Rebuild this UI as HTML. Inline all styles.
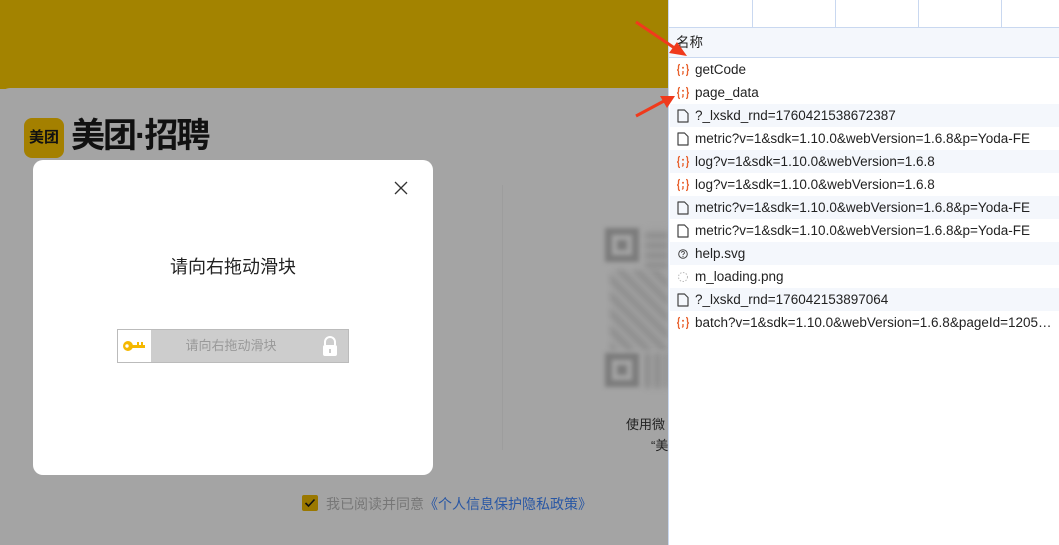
<!DOCTYPE html><html><head><meta charset="utf-8"><style>
*{margin:0;padding:0;box-sizing:border-box}
body{width:1059px;height:545px;overflow:hidden;position:relative;background:#a4a4a4;font-family:"Liberation Sans","Noto Sans CJK SC",sans-serif}
.abs{position:absolute}
#top{left:0;top:0;width:668px;height:89px;background:#a38300}
#gray{left:0;top:88px;width:668px;height:457px;background:#a4a4a4;border-top-left-radius:10px}
#panel{left:668px;top:0;width:391px;height:545px;background:#fff;border-left:1px solid #c9d8f0}
.row{position:absolute;left:1px;width:390px;height:23px;font-size:13.5px;color:#222;line-height:23px;padding-left:25px;white-space:nowrap;overflow:hidden}
.row.alt{background:#f4f7fc}
.ic{position:absolute;left:6px;top:5px;width:14px;height:14px}
.fp{position:absolute;width:34px;height:34px;border:7px solid #7c7c7c;filter:blur(2px)}
.fp:after{content:"";position:absolute;left:5px;top:5px;width:10px;height:10px;background:#7c7c7c}
</style></head><body>
<div id="top" class="abs"></div>
<div id="gray" class="abs"></div>
<div class="abs" style="left:24px;top:118px;width:40px;height:40px;background:#a48000;border-radius:8px;font-size:15px;font-weight:bold;color:#111;line-height:40px;text-align:center">美团</div>
<div class="abs" style="left:71px;top:114px;font-size:34px;font-weight:bold;color:#111;letter-spacing:-2px;line-height:44px">美团·招聘</div>
<div class="abs" style="left:502px;top:185px;width:1px;height:265px;background:#9d9d9d"></div>
<div class="fp" style="left:605px;top:228px"></div>
<div class="fp" style="left:605px;top:353px"></div>
<div class="abs" style="left:610px;top:270px;width:58px;height:80px;background:repeating-linear-gradient(45deg,#888 0 6px,#a0a0a0 6px 12px);filter:blur(3px);opacity:.8"></div>
<div class="abs" style="left:645px;top:228px;width:23px;height:40px;background:repeating-linear-gradient(0deg,#8a8a8a 0 5px,#a0a0a0 5px 10px);filter:blur(3px)"></div>
<div class="abs" style="left:645px;top:353px;width:23px;height:35px;background:repeating-linear-gradient(90deg,#8a8a8a 0 5px,#a0a0a0 5px 10px);filter:blur(3px)"></div>
<div class="abs" style="left:626px;top:414px;font-size:13px;color:#222">使用微</div>
<div class="abs" style="left:651px;top:435px;font-size:13px;color:#222">“美</div>
<div class="abs" style="left:302px;top:495px;width:16px;height:16px;background:#9a7800;border-radius:2px"><svg width="16" height="16"><path d="M3.5 8l3 3L12.5 4.5" stroke="#111" stroke-width="1.6" fill="none"/></svg></div>
<div class="abs" style="left:326px;top:494px;font-size:14px;color:#777">我已阅读并同意<span style="color:#2957a4">《个人信息保护隐私政策》</span></div>
<div class="abs" style="left:33px;top:160px;width:400px;height:315px;background:#fff;border-radius:10px">
<svg class="abs" style="left:361px;top:21px" width="14" height="14"><path d="M1 1L13 13M13 1L1 13" stroke="#333" stroke-width="1.3"/></svg>
<div class="abs" style="left:0;top:93px;width:400px;text-align:center;font-size:18px;color:#222">请向右拖动滑块</div>
<div class="abs" style="left:84px;top:169px;width:232px;height:34px;background:#cdcdcd;border:1px solid #bbb">
<div class="abs" style="left:0;top:0;width:33px;height:32px;background:#fff"><svg width="33" height="32"><circle cx="10" cy="16" r="5" fill="#f5b800"/><circle cx="9" cy="16" r="1.7" fill="#fff"/><rect x="14" y="15" width="13" height="3" fill="#f5b800"/><rect x="19" y="12" width="2" height="4" fill="#f5b800"/><rect x="23" y="12" width="2" height="4" fill="#f5b800"/></svg></div>
<div class="abs" style="left:33px;top:0;width:160px;text-align:center;line-height:32px;font-size:13px;color:#999">请向右拖动滑块</div>
<svg class="abs" style="left:203px;top:5px" width="18" height="22"><path d="M4 10V7a5 5 0 0110 0v3" stroke="#fff" stroke-width="2" fill="none"/><rect x="2" y="10" width="14" height="11" rx="2" fill="#fff"/><rect x="8" y="14" width="2" height="4" fill="#ccc"/></svg>
</div></div>
<div id="panel" class="abs">
<div class="abs" style="left:0;top:0;width:390px;height:28px;border-bottom:1px solid #c9d8f0"></div>
<div class="abs" style="left:83px;top:0;width:1px;height:28px;background:#c9d8f0"></div>
<div class="abs" style="left:166px;top:0;width:1px;height:28px;background:#c9d8f0"></div>
<div class="abs" style="left:249px;top:0;width:1px;height:28px;background:#c9d8f0"></div>
<div class="abs" style="left:332px;top:0;width:1px;height:28px;background:#c9d8f0"></div>
<div class="abs" style="left:0;top:28px;width:390px;height:30px;background:#f4f7fc;border-bottom:1px solid #c9d8f0;font-size:13.5px;line-height:29px;padding-left:7px;color:#222">名称</div>
</div>
<svg width="0" height="0" style="position:absolute"><defs><symbol id="js" viewBox="0 0 14 14"><path d="M4 1.5C2.5 1.5 2.5 2.5 2.5 4v1.5C2.5 6.5 1.5 7 1 7c.5 0 1.5.5 1.5 1.5V10c0 1.5 0 2.5 1.5 2.5M10 1.5c1.5 0 1.5 1 1.5 2.5v1.5c0 1 1 1.5 1.5 1.5-.5 0-1.5.5-1.5 1.5V10c0 1.5 0 2.5-1.5 2.5" stroke="#e8602c" stroke-width="1.3" fill="none"/><circle cx="7" cy="4.8" r="1" fill="#e8602c"/><path d="M7 8v2.5l-.8 1" stroke="#e8602c" stroke-width="1.3" fill="none"/></symbol><symbol id="doc" viewBox="0 0 14 14"><path d="M2 1h6.5l3.5 3.5V13H2z" stroke="#444" stroke-width="1.2" fill="none" stroke-linejoin="round"/></symbol></defs></svg>
<div class="abs" style="left:669px;top:0;width:390px;height:545px">
<div class="row" style="top:58px"><svg class="ic"><use href="#js"/></svg>getCode</div>
<div class="row" style="top:81px"><svg class="ic"><use href="#js"/></svg>page_data</div>
<div class="row alt" style="top:104px"><svg class="ic"><use href="#doc"/></svg>?_lxskd_rnd=1760421538672387</div>
<div class="row" style="top:127px"><svg class="ic"><use href="#doc"/></svg>metric?v=1&amp;sdk=1.10.0&amp;webVersion=1.6.8&amp;p=Yoda-FE</div>
<div class="row alt" style="top:150px"><svg class="ic"><use href="#js"/></svg>log?v=1&amp;sdk=1.10.0&amp;webVersion=1.6.8</div>
<div class="row" style="top:173px"><svg class="ic"><use href="#js"/></svg>log?v=1&amp;sdk=1.10.0&amp;webVersion=1.6.8</div>
<div class="row alt" style="top:196px"><svg class="ic"><use href="#doc"/></svg>metric?v=1&amp;sdk=1.10.0&amp;webVersion=1.6.8&amp;p=Yoda-FE</div>
<div class="row" style="top:219px"><svg class="ic"><use href="#doc"/></svg>metric?v=1&amp;sdk=1.10.0&amp;webVersion=1.6.8&amp;p=Yoda-FE</div>
<div class="row alt" style="top:242px"><svg class="ic"><circle cx="7" cy="7" r="4.3" stroke="#444" fill="none"/><path d="M5.6 5.8a1.4 1.4 0 112 1.2c-.5.3-.6.5-.6 1" stroke="#444" fill="none" stroke-width=".9"/><circle cx="7" cy="9.4" r=".6" fill="#444"/></svg>help.svg</div>
<div class="row" style="top:265px"><svg class="ic"><circle cx="7" cy="7" r="4.5" stroke="#bbb" stroke-dasharray="1.5 1.5" fill="none"/></svg>m_loading.png</div>
<div class="row alt" style="top:288px"><svg class="ic"><use href="#doc"/></svg>?_lxskd_rnd=176042153897064</div>
<div class="row" style="top:311px"><svg class="ic"><use href="#js"/></svg>batch?v=1&amp;sdk=1.10.0&amp;webVersion=1.6.8&amp;pageId=1205…</div>
</div>
<svg class="abs" style="left:0;top:0" width="1059" height="545">
<path d="M636 22L676 49" stroke="#f03a1c" stroke-width="3"/><path d="M687 56L669 53L677 42z" fill="#f03a1c"/>
<path d="M636 116L664 101" stroke="#f03a1c" stroke-width="3"/><path d="M675 96L667 108L660 96z" fill="#f03a1c"/>
</svg>
</body></html>
